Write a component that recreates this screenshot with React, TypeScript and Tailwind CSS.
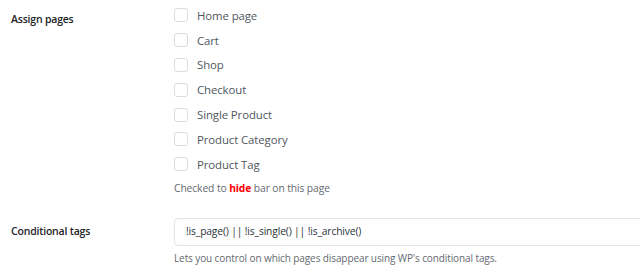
const pages = [
  "Home page",
  "Cart",
  "Shop",
  "Checkout",
  "Single Product",
  "Product Category",
  "Product Tag",
];

export default function App() {
  return (
    <div
      className="w-[640px] h-[269px] overflow-hidden bg-white text-[#3c434a]"
      style={{ fontFamily: '"Open Sans", "Noto Sans", sans-serif' }}
    >
      <div className="flex pt-[3px]">
        <div className="w-[174px] shrink-0 pl-[11px] pt-[9px] text-[10.5px] tracking-[-0.2px] font-semibold text-[#1d2327]">
          Assign pages
        </div>
        <div className="flex flex-col">
          {pages.map((p) => (
            <label key={p} className="flex items-center h-[24.8px] gap-[9px]">
              <span className="w-[14px] h-[14px] rounded-[3px] border border-[#dcdcde] bg-white" />
              <span className="text-[11.4px] tracking-[-0.1px] text-[#50575e]">{p}</span>
            </label>
          ))}
          <p className="mt-[4px] text-[10.3px] tracking-[-0.1px] text-[#646970]">
            Checked to <b className="text-[#ff0000] font-bold">hide</b> bar on this page
          </p>
        </div>
      </div>
      <div className="flex mt-[22px]">
        <div className="w-[174px] shrink-0 pl-[11px] pt-[6px] text-[10.5px] tracking-[-0.2px] font-semibold text-[#1d2327]">
          Conditional tags
        </div>
        <div className="flex flex-col flex-1">
          <div className="h-[28px] w-[480px] rounded-[4px] border border-[#e2e4e7] bg-white pl-[11px] flex items-center text-[10.3px] tracking-[-0.15px] text-[#2c3338]">
            !is_page() || !is_single() || !is_archive()
          </div>
          <p className="mt-[5px] text-[10px] tracking-[-0.1px] text-[#646970]">
            Lets you control on which pages disappear using WP's conditional tags.
          </p>
        </div>
      </div>
    </div>
  );
}
